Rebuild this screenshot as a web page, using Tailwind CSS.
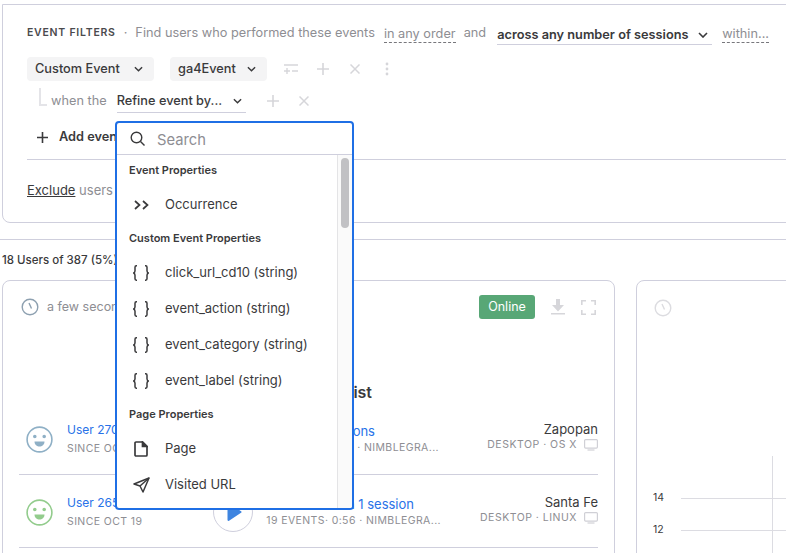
<!DOCTYPE html>
<html lang="en">
<head>
  <meta charset="UTF-8">
  <title>Event Filters</title>
  <script src="https://cdn.jsdelivr.net/npm/@tailwindcss/browser@4"></script>
</head>
<body class="bg-white">
  <div class="relative w-[786px] h-[553px] overflow-hidden font-['Inter','Noto_Sans',sans-serif] text-[#3a3a3c]">

    <!-- filter panel -->
    <div class="ml-[2px] mt-[4px] w-[900px] h-[219px] border border-[#cfcfdd] rounded-b-[8px] pl-[24px] pt-[19px]">
      <div class="flex items-center h-[18px] text-[12.75px] text-[#8e8e93] whitespace-nowrap">
        <span class="text-[10.5px] font-semibold tracking-[0.75px] text-[#4a4a4d]">EVENT FILTERS</span>
        <span class="mx-[8px]">·</span>
        <span>Find users who performed these events</span>
        <span class="ml-[9px] border-b border-dashed border-[#77777c] leading-[16px] mt-[3px]">in any order</span>
        <span class="ml-[8px]">and</span>
        <span class="ml-[11px] w-[215px] flex items-center justify-between border-b border-[#cfcfdd] font-semibold text-[#3a3a3c] leading-[18px] mt-[4px] pr-[4px]">across any number of sessions
          <svg class="w-[10px] h-[6px]" viewBox="0 0 10 6" fill="none" stroke="#3a3a3c" stroke-width="1.6"><path d="M1 1l4 4 4-4"/></svg>
        </span>
        <span class="ml-[10px] border-b border-dashed border-[#77777c] leading-[16px] mt-[3px]">within...</span>
      </div>

      <div class="flex items-center mt-[15px] h-[24px] text-[12.75px] font-medium">
        <div class="flex items-center justify-between w-[127px] h-[24px] pl-[8px] pr-[11px] bg-[#f4f4f5] rounded-[4px]">Custom Event
          <svg class="w-[9px] h-[6px]" viewBox="0 0 10 6" fill="none" stroke="#3a3a3c" stroke-width="1.6"><path d="M1 1l4 4 4-4"/></svg>
        </div>
        <div class="ml-[16px] flex items-center justify-between w-[97px] h-[24px] pl-[8px] pr-[11px] bg-[#f4f4f5] rounded-[4px]">ga4Event
          <svg class="w-[9px] h-[6px]" viewBox="0 0 10 6" fill="none" stroke="#3a3a3c" stroke-width="1.6"><path d="M1 1l4 4 4-4"/></svg>
        </div>
        <svg class="ml-[17px] w-[14px] h-[12px]" viewBox="0 0 14 12" fill="none" stroke="#d6d6da" stroke-width="1.4"><path d="M0 2h14M8 8h6M0 8h6M3 5v6"/></svg>
        <svg class="ml-[19px] w-[12px] h-[12px]" viewBox="0 0 12 12" stroke="#d6d6da" stroke-width="1.6"><path d="M6 0v12M0 6h12"/></svg>
        <svg class="ml-[21px] w-[10px] h-[10px]" viewBox="0 0 10 10" stroke="#d6d6da" stroke-width="1.5"><path d="M0.5 0.5l9 9M9.5 0.5l-9 9"/></svg>
        <svg class="ml-[25px] w-[4px] h-[14px]" viewBox="0 0 4 14" fill="#d6d6da"><circle cx="2" cy="2" r="1.4"/><circle cx="2" cy="7" r="1.4"/><circle cx="2" cy="12" r="1.4"/></svg>
      </div>

      <div class="flex items-center h-[24px] mt-[8px] text-[12.75px]">
        <div class="ml-[12px] -mt-[8px] w-[8px] h-[18px] border-l-2 border-b-2 border-[#e4e4e8]"></div>
        <span class="ml-[4px] text-[#8e8e93]">when the</span>
        <div class="ml-[10px] w-[129px] flex items-center justify-between h-[24px] border-b border-[#cfcfdd] font-medium pr-[4px]">Refine event by...
          <svg class="w-[9px] h-[6px]" viewBox="0 0 10 6" fill="none" stroke="#3a3a3c" stroke-width="1.6"><path d="M1 1l4 4 4-4"/></svg>
        </div>
        <svg class="ml-[21px] w-[12px] h-[12px]" viewBox="0 0 12 12" stroke="#d6d6da" stroke-width="1.6"><path d="M6 0v12M0 6h12"/></svg>
        <svg class="ml-[20px] w-[10px] h-[10px]" viewBox="0 0 10 10" stroke="#d6d6da" stroke-width="1.5"><path d="M0.5 0.5l9 9M9.5 0.5l-9 9"/></svg>
      </div>

      <div class="flex items-center h-[20px] mt-[14px] ml-[10px] text-[12.75px] font-semibold whitespace-nowrap">
        <svg class="w-[11px] h-[11px]" viewBox="0 0 11 11" stroke="#3a3a3c" stroke-width="1.6"><path d="M5.5 0v11M0 5.5h11"/></svg>
        <span class="ml-[11px]">Add event</span>
      </div>

      <div class="mt-[12px] w-[762px] border-t border-[#cfcfdd]"></div>

      <div class="mt-[22px] text-[13px] text-[#8e8e93] leading-[16px]"><span class="underline text-[#3a3a3c]">Exclude</span> users</div>
    </div>

    <div class="mt-[16px] w-full border-t border-[#cfcfdd]"></div>
    <div class="mt-[12px] ml-[2px] h-[16px] text-[11.5px] leading-[16px] font-medium">18 Users of 387 (5%)</div>

    <!-- cards -->
    <div class="flex mt-[12px] ml-[2px] gap-[21px]">
      <div class="relative shrink-0 w-[613px] h-[300px] border border-[#cfcfdd] rounded-[8px]">
        <div class="flex items-center h-[26px] mt-[13px] ml-[18px]">
          <svg class="w-[18px] h-[18px]" viewBox="0 0 18 18" fill="none" stroke="#8da0b0" stroke-width="1.4"><circle cx="9" cy="9" r="7.8"/><path d="M8 5l2.5 5.5"/></svg>
          <span class="ml-[8px] w-[68px] overflow-hidden whitespace-nowrap text-[12.5px] text-[#8e8e93]">a few seconds ago</span>
          <span class="ml-auto flex items-center justify-center w-[56px] h-[24px] rounded-[3px] bg-[#58a776] text-white text-[12.5px]">Online</span>
          <svg class="ml-[16px] w-[14px] h-[16px]" viewBox="0 0 14 16" fill="#d6d6da"><path d="M5 0h4v6h4l-6 6.5L1 6h4zM0 14h14v1.4H0z"/></svg>
          <svg class="ml-[16px] mr-[18px] w-[15px] h-[15px]" viewBox="0 0 15 15" fill="none" stroke="#d6d6da" stroke-width="1.6"><path d="M0.8 5V0.8H5M10 0.8h4.2V5M14.2 10v4.2H10M5 14.2H0.8V10"/></svg>
        </div>

        <div class="mt-[60px] -mb-[2px] h-[24px] text-right pr-[242px] text-[16px] font-semibold leading-[24px]">Watchlist</div>

        <!-- rows -->
        <div class="ml-[16px] mr-[16px] h-[73px] pt-[18px] border-b border-[#cfcfdd] flex">
          <svg class="mt-[6px] ml-[7px] w-[27px] h-[27px]" viewBox="0 0 27 27" fill="none" stroke="#8fb0c6" stroke-width="1.6"><circle cx="13.5" cy="13.5" r="12.4"/><circle cx="8.8" cy="10.5" r="1" fill="#8fb0c6"/><circle cx="18.2" cy="10.5" r="1" fill="#8fb0c6"/><path d="M8.5 15.5h10c0 3.5-2.5 5-5 5s-5-1.5-5-5z" fill="#8fb0c6" stroke="none"/></svg>
          <div class="ml-[14px] w-[146px] pt-[1px]">
            <div class="text-[12px] leading-[18px] text-[#2872e8]">User 270</div>
            <div class="text-[10.5px] leading-[20px] tracking-[0.4px] text-[#8e8e93]">SINCE OCT 19</div>
          </div>
          <div class="mt-[-1px] w-[40px] h-[40px] rounded-full border border-[#cfcfdd]"></div>
          <div class="ml-[12px] w-[176px] pt-[2px] whitespace-nowrap">
            <div class="text-[13px] leading-[18px] text-[#2872e8] w-[110px] text-right">2 sessions</div>
            <div class="mt-[1px] text-[10.5px] leading-[14px] tracking-[0.4px] text-[#8e8e93] text-right pr-[2px]">· NIMBLEGRA...</div>
          </div>
          <div class="ml-auto text-right whitespace-nowrap">
            <div class="text-[13px] leading-[18px] text-[#3a3a3c]">Zapopan</div>
            <div class="mt-[1px] flex items-center justify-end text-[10.5px] leading-[12px] tracking-[0.5px] text-[#8e8e93]">DESKTOP · OS X
              <svg class="ml-[7px] w-[14px] h-[12px]" viewBox="0 0 14 12" fill="none" stroke="#d0d0d6" stroke-width="1.2"><rect x="0.6" y="0.6" width="12.8" height="8.5" rx="1"/><path d="M3.5 11h7"/></svg>
            </div>
          </div>
        </div>

        <div class="ml-[16px] mr-[16px] h-[73px] pt-[18px] border-b border-[#cfcfdd] flex">
          <svg class="mt-[6px] ml-[7px] w-[27px] h-[27px]" viewBox="0 0 27 27" fill="none" stroke="#93cc8d" stroke-width="1.6"><circle cx="13.5" cy="13.5" r="12.4"/><circle cx="8.8" cy="10.5" r="1" fill="#93cc8d"/><circle cx="18.2" cy="10.5" r="1" fill="#93cc8d"/><path d="M8.5 15.5h10c0 3.5-2.5 5-5 5s-5-1.5-5-5z" fill="#93cc8d" stroke="none"/></svg>
          <div class="ml-[14px] w-[146px] pt-[1px]">
            <div class="text-[12px] leading-[18px] text-[#2872e8]">User 265</div>
            <div class="text-[10.5px] leading-[20px] tracking-[0.4px] text-[#8e8e93]">SINCE OCT 19</div>
          </div>
          <div class="mt-[-1px] w-[40px] h-[40px] rounded-full border border-[#cfcfdd] flex items-center justify-center">
            <svg class="ml-[3px] w-[15px] h-[20px]" viewBox="0 0 15 20" fill="#3f85e0" stroke="#3f85e0" stroke-width="2" stroke-linejoin="round"><path d="M1.5 2l12 8-12 8z"/></svg>
          </div>
          <div class="ml-[12px] w-[176px] pt-[2px] whitespace-nowrap">
            <div class="text-[13px] leading-[18px] text-[#2872e8] w-[149px] text-right">Visited in 1 session</div>
            <div class="mt-[1px] text-[10.5px] leading-[14px] tracking-[0.4px] text-[#8e8e93] text-right">19 EVENTS· 0:56 · NIMBLEGRA...</div>
          </div>
          <div class="ml-auto text-right whitespace-nowrap">
            <div class="text-[13px] leading-[18px] text-[#3a3a3c]">Santa Fe</div>
            <div class="mt-[1px] flex items-center justify-end text-[10.5px] leading-[12px] tracking-[0.5px] text-[#8e8e93]">DESKTOP · LINUX
              <svg class="ml-[7px] w-[14px] h-[12px]" viewBox="0 0 14 12" fill="none" stroke="#d0d0d6" stroke-width="1.2"><rect x="0.6" y="0.6" width="12.8" height="8.5" rx="1"/><path d="M3.5 11h7"/></svg>
            </div>
          </div>
        </div>
      </div>

      <div class="relative shrink-0 w-[300px] h-[300px] border border-[#cfcfdd] rounded-[8px]">
        <svg class="ml-[17px] mt-[18px] w-[18px] h-[18px]" viewBox="0 0 18 18" fill="none" stroke="#dcdce0" stroke-width="1.4"><circle cx="9" cy="9" r="7.8"/><path d="M8 5l2.5 5.5"/></svg>
        <div class="absolute left-[135px] top-[175px] h-[130px] border-l border-[#dcdce2]"></div>
        <div class="absolute left-[16px] top-[210px] flex items-center w-[200px] text-[10.5px] leading-[14px]">14<div class="ml-[17px] flex-1 border-t border-[#dcdce2]"></div></div>
        <div class="absolute left-[16px] top-[242px] flex items-center w-[200px] text-[10.5px] leading-[14px]">12<div class="ml-[17px] flex-1 border-t border-[#dcdce2]"></div></div>
      </div>
    </div>

    <!-- dropdown over the page -->
    <div class="absolute left-[115px] top-[121px] w-[239px] h-[389px] bg-white border-2 border-[#1f6fe5] rounded-[4px] overflow-hidden">
      <div class="flex items-center h-[32px] border-b border-[#cfcfdd] pl-[13px]">
        <svg class="w-[15px] h-[15px]" viewBox="0 0 15 15" fill="none" stroke="#3a3a3c" stroke-width="1.4"><circle cx="6.5" cy="6.5" r="5.3"/><path d="M10.5 10.5l4 4"/></svg>
        <span class="ml-[12px] mt-[4px] text-[14.75px] text-[#8e8e93]">Search</span>
      </div>
      <div class="flex h-[355px]">
        <div class="flex-1 pl-[12px] text-[13px] whitespace-nowrap">
          <div class="h-[32px] pt-[7px] text-[11px] font-semibold leading-[16px]">Event Properties</div>
          <div class="flex items-center h-[36px]">
            <span class="flex w-[36px] pl-[5px]"><svg class="w-[15px] h-[10px]" viewBox="0 0 15 10" fill="none" stroke="#3a3a3c" stroke-width="1.7"><path d="M1 1l4.5 4L1 9M9 1l4.5 4L9 9"/></svg></span>Occurrence
          </div>
          <div class="h-[32px] pt-[7px] text-[11px] font-semibold leading-[16px]">Custom Event Properties</div>
          <div class="flex items-center h-[36px]"><span class="flex w-[36px] pl-[4px]"><svg class="w-[16px] h-[16px]" viewBox="0 0 16 16" fill="none" stroke="#3a3a3c" stroke-width="1.5"><path d="M4 .8H3.3C2.4.8 2 1.3 2 2.2v3.5c0 1.100-.5 1.900-1.300 2.300.8.400 1.300 1.200 1.300 2.300v3.500c0 .9.4 1.400 1.300 1.400H4M12 .8h.7c.9 0 1.300.5 1.300 1.400v3.500c0 1.100.5 1.900 1.300 2.300-.8.400-1.300 1.200-1.300 2.300v3.500c0 .9-.4 1.400-1.300 1.400H12"/></svg></span>click_url_cd10 (string)</div>
          <div class="flex items-center h-[36px]"><span class="flex w-[36px] pl-[4px]"><svg class="w-[16px] h-[16px]" viewBox="0 0 16 16" fill="none" stroke="#3a3a3c" stroke-width="1.5"><path d="M4 .8H3.3C2.4.8 2 1.3 2 2.2v3.5c0 1.100-.5 1.900-1.300 2.300.8.400 1.300 1.200 1.300 2.300v3.500c0 .9.4 1.400 1.300 1.400H4M12 .8h.7c.9 0 1.300.5 1.300 1.400v3.500c0 1.100.5 1.900 1.300 2.300-.8.400-1.300 1.200-1.300 2.300v3.500c0 .9-.4 1.400-1.300 1.400H12"/></svg></span>event_action (string)</div>
          <div class="flex items-center h-[36px]"><span class="flex w-[36px] pl-[4px]"><svg class="w-[16px] h-[16px]" viewBox="0 0 16 16" fill="none" stroke="#3a3a3c" stroke-width="1.5"><path d="M4 .8H3.3C2.4.8 2 1.3 2 2.2v3.5c0 1.100-.5 1.900-1.300 2.300.8.400 1.300 1.200 1.300 2.300v3.500c0 .9.4 1.400 1.300 1.400H4M12 .8h.7c.9 0 1.300.5 1.300 1.400v3.500c0 1.100.5 1.900 1.300 2.300-.8.400-1.300 1.200-1.300 2.300v3.500c0 .9-.4 1.400-1.300 1.400H12"/></svg></span>event_category (string)</div>
          <div class="flex items-center h-[36px]"><span class="flex w-[36px] pl-[4px]"><svg class="w-[16px] h-[16px]" viewBox="0 0 16 16" fill="none" stroke="#3a3a3c" stroke-width="1.5"><path d="M4 .8H3.3C2.4.8 2 1.3 2 2.2v3.5c0 1.100-.5 1.900-1.300 2.300.8.400 1.300 1.200 1.300 2.300v3.500c0 .9.4 1.400 1.300 1.400H4M12 .8h.7c.9 0 1.300.5 1.300 1.400v3.500c0 1.100.5 1.900 1.300 2.300-.8.400-1.300 1.200-1.300 2.300v3.500c0 .9-.4 1.400-1.300 1.400H12"/></svg></span>event_label (string)</div>
          <div class="h-[32px] pt-[7px] text-[11px] font-semibold leading-[16px]">Page Properties</div>
          <div class="flex items-center h-[36px]">
            <span class="flex w-[36px] pl-[5px]"><svg class="w-[14px] h-[16px]" viewBox="0 0 14 16" fill="none" stroke="#3a3a3c" stroke-width="1.7"><path d="M2 1h6.5l4.500 4.500V14a1 1 0 0 1-1 1H2a1 1 0 0 1-1-1V2a1 1 0 0 1 1-1z" stroke-linejoin="round"/><path d="M8.500 1v4.500H13z" fill="#3a3a3c"/></svg></span>Page
          </div>
          <div class="flex items-center h-[36px]">
            <span class="flex w-[36px] pl-[4px]"><svg class="w-[17px] h-[16px]" viewBox="0 0 17 16" fill="none" stroke="#3a3a3c" stroke-width="1.5" stroke-linejoin="round"><path d="M16 1L1 7l6 2 3 6z"/><path d="M7 9l9-8"/></svg></span>Visited URL
          </div>
        </div>
        <div class="w-[15px] border-l border-[#e4e4e6] bg-[#fafafa] pt-[3px]">
          <div class="ml-[3px] w-[8px] h-[70px] rounded-[4px] bg-[#c1c1c4]"></div>
        </div>
      </div>
    </div>
  </div>
</body>
</html>
